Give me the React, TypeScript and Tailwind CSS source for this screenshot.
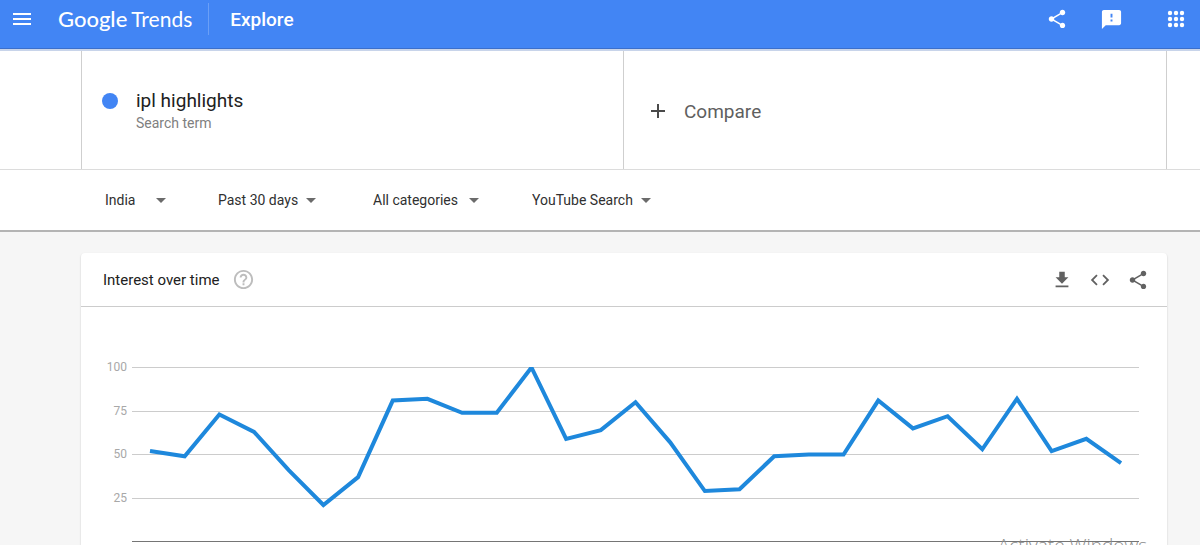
import { useId } from "react";
import {
  MdArrowDropDown,
  MdCode,
  MdFeedback,
  MdFileDownload,
  MdHelpOutline,
  MdMenu,
  MdShare,
} from "react-icons/md";

const INTEREST = [
  52, 49, 73, 63, 41, 21, 37, 81, 82, 74, 74, 100, 59, 64, 80, 57, 29, 30, 49, 50, 50, 81, 65, 72,
  53, 82, 52, 59, 45,
];

const TICKS = [100, 75, 50, 25];

const PLOT_WIDTH = 1007;
const PLOT_HEIGHT = 175;
const PLOT_INSET = 18;

function yFor(value: number): number {
  return 174.5 - value * 1.74;
}

function AppsIcon() {
  const stops = [4, 10, 16];

  return (
    <svg width="20" height="20" viewBox="0 0 20 20" fill="currentColor">
      {stops.map((cy) => stops.map((cx) => <circle key={`${cx}-${cy}`} cx={cx} cy={cy} r="2.2" />))}
    </svg>
  );
}

function Header() {
  return (
    <header className="relative z-10 flex h-[49px] items-center border-b border-[#3b6fcb] bg-[#4285f4] pb-2.5 pl-2.5 pr-3.5 text-white shadow-[0_2px_0_#c8d4ea]">
      <button type="button" aria-label="Main menu">
        <MdMenu size={24} />
      </button>
      <a
        href="#"
        className="ml-6 flex items-baseline gap-1 font-['Lato',sans-serif] text-[21px] leading-6"
      >
        <span className="text-[22px] font-medium">Google</span>
        <span>Trends</span>
      </a>
      <div className="ml-4 h-8 w-px bg-[#6a9ff7]" />
      <h1 className="ml-[21px] pt-0.5 text-[19px] leading-6 font-medium">Explore</h1>
      <div className="ml-auto flex items-center">
        <button type="button" aria-label="Share">
          <MdShare size={22} />
        </button>
        <button type="button" aria-label="Send feedback" className="ml-8">
          <MdFeedback size={23} />
        </button>
        <button type="button" aria-label="Google apps" className="ml-[43px]">
          <AppsIcon />
        </button>
      </div>
    </header>
  );
}

function SearchTerms() {
  const id = useId();

  return (
    <section className="border-b border-[#dcdcdc] pl-[81px] pr-[33px]">
      <div className="grid h-[120px] grid-cols-2 border-x border-[#cfcfcf]">
        <div className="flex items-start border-r border-[#cfcfcf] pt-10 pl-5">
          <span className="mt-1 h-4 w-4 rounded-full bg-[#4285f4]" />
          <div className="ml-[18px] flex min-w-0 flex-1 flex-col-reverse">
            <label htmlFor={id} className="text-sm leading-5 text-[#808080]">
              Search term
            </label>
            <input
              id={id}
              defaultValue="ipl highlights"
              className="w-full bg-transparent text-[19px] leading-6 text-[#212121] outline-none"
            />
          </div>
        </div>
        <button type="button" className="flex items-center pt-1 pl-6 text-[19px] text-[#5f5f5f]">
          <svg width="20" height="20" viewBox="0 0 20 20" stroke="#4a4a4a" strokeWidth="2">
            <path d="M10 3v14M3 10h14" />
          </svg>
          <span className="ml-4 pt-0.5">Compare</span>
        </button>
      </div>
    </section>
  );
}

interface FilterProps {
  label: string;
  value: string;
  className: string;
}

function Filter({ label, value, className }: FilterProps) {
  return (
    <div className={`relative flex items-center ${className}`}>
      <select
        aria-label={label}
        className="w-full appearance-none bg-transparent text-sm leading-5 text-[#303030] outline-none"
      >
        <option>{value}</option>
      </select>
      <MdArrowDropDown size={24} className="pointer-events-none absolute -right-1.5 text-[#6b6b6b]" />
    </div>
  );
}

function Filters() {
  return (
    <section className="flex h-[62px] items-center border-b-2 border-[#b4b4b4] pl-[105px]">
      <Filter label="Region" value="India" className="mr-[51px] w-[62px]" />
      <Filter label="Time range" value="Past 30 days" className="mr-14 w-[99px]" />
      <Filter label="Category" value="All categories" className="mr-[52px] w-[107px]" />
      <Filter label="Search type" value="YouTube Search" className="w-[120px]" />
    </section>
  );
}

function InterestChart() {
  const step = (PLOT_WIDTH - PLOT_INSET * 2) / (INTEREST.length - 1);
  const points = INTEREST.map((value, i) => `${PLOT_INSET + i * step},${yFor(value)}`).join(" ");

  return (
    <div className="flex pt-[54px] pr-7">
      <div className="flex h-[143px] w-[46px] flex-col justify-between text-right text-xs leading-3 text-[#a8a8a8]">
        {TICKS.map((tick) => (
          <span key={tick}>{tick}</span>
        ))}
      </div>
      <svg
        className="mt-1.5 ml-[5px] h-[175px] min-w-0 flex-1"
        viewBox={`0 0 ${PLOT_WIDTH} ${PLOT_HEIGHT}`}
        preserveAspectRatio="none"
        role="img"
        aria-label="Interest over time"
      >
        {TICKS.map((tick) => (
          <rect key={tick} y={Math.floor(yFor(tick))} width={PLOT_WIDTH} height="1" fill="#cccccc" />
        ))}
        <rect y="174" width={PLOT_WIDTH} height="1" fill="#757575" />
        <polyline
          points={points}
          fill="none"
          stroke="#1e88dc"
          strokeWidth="4"
          vectorEffect="non-scaling-stroke"
        />
      </svg>
    </div>
  );
}

export default function App() {
  return (
    <div className="relative flex h-screen flex-col overflow-hidden bg-[#f6f6f6] font-['Roboto',sans-serif]">
      <Header />
      <div className="shrink-0 bg-white">
        <SearchTerms />
        <Filters />
      </div>

      <main className="mt-[21px] mr-[33px] ml-[81px] flex-1 rounded-t-sm bg-white shadow-[0_1px_2px_rgba(0,0,0,0.2)]">
        <div className="flex h-[54px] items-center border-b border-[#cccccc] pr-[18px] pl-[22px]">
          <h2 className="text-[15px] leading-6 text-[#212121]">Interest over time</h2>
          <button type="button" aria-label="Help" className="ml-3 text-[#bdbdbd]">
            <MdHelpOutline size={23} />
          </button>
          <div className="ml-auto flex gap-4 text-[#616161]">
            <button type="button" aria-label="Download CSV">
              <MdFileDownload size={22} />
            </button>
            <button type="button" aria-label="Embed">
              <MdCode size={22} />
            </button>
            <button type="button" aria-label="Share chart">
              <MdShare size={22} />
            </button>
          </div>
        </div>
        <InterestChart />
      </main>

      <p className="pointer-events-none absolute right-[53px] -bottom-3.5 font-['Open_Sans',sans-serif] text-[19px] leading-7 font-light text-[#8c8c8c]">
        Activate Windows
      </p>
    </div>
  );
}
